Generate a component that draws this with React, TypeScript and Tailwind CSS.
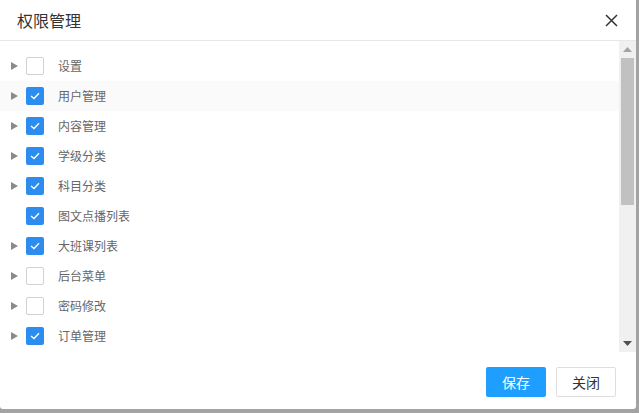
import { useState } from 'react';

interface PermItem {
  name: string;
  checked: boolean;
  hasChildren: boolean;
}

const items: PermItem[] = [
  { name: '设置', checked: false, hasChildren: true },
  { name: '用户管理', checked: true, hasChildren: true },
  { name: '内容管理', checked: true, hasChildren: true },
  { name: '学级分类', checked: true, hasChildren: true },
  { name: '科目分类', checked: true, hasChildren: true },
  { name: '图文点播列表', checked: true, hasChildren: false },
  { name: '大班课列表', checked: true, hasChildren: true },
  { name: '后台菜单', checked: false, hasChildren: true },
  { name: '密码修改', checked: false, hasChildren: true },
  { name: '订单管理', checked: true, hasChildren: true },
];

function Caret() {
  return (
    <svg width="7" height="8" viewBox="0 0 7 8">
      <path d="M0 0 L7 4 L0 8 Z" fill="#8a8a8a" />
    </svg>
  );
}

function Checkbox({ checked }: { checked: boolean }) {
  if (checked) {
    return (
      <span className="flex h-[18px] w-[18px] items-center justify-center rounded-[2px] bg-[#2d8cf0]">
        <svg width="10" height="8" viewBox="0 0 10 8">
          <path d="M1 4 L4 6.5 L9 1.2" fill="none" stroke="#fff" strokeWidth="1.3" />
        </svg>
      </span>
    );
  }
  return <span className="h-[18px] w-[18px] rounded-[2px] border border-[#d2d2d2] bg-white" />;
}

export default function App() {
  const [hovered, setHovered] = useState(1);

  return (
    <div
      className="h-[413px] w-[639px] bg-[#a3a3a3]"
      style={{ fontFamily: '"Noto Sans CJK SC", "Noto Sans", sans-serif' }}
    >
      <div className="flex h-[409px] w-[636px] flex-col rounded-b-[3px] bg-white">
        {/* header */}
        <div className="flex h-[41px] shrink-0 items-center justify-between border-b border-[#e8e8e8] pl-[17px] pr-[18px]">
          <span className="text-[16px] leading-none text-[#333]">权限管理</span>
          <svg width="13" height="13" viewBox="0 0 13 13">
            <path d="M1 1 L12 12 M12 1 L1 12" stroke="#333" strokeWidth="1.5" />
          </svg>
        </div>

        {/* tree + scrollbar */}
        <div className="flex h-[311px] shrink-0">
          <div className="flex-1 pt-[10px]">
            {items.map((item, i) => (
              <div
                key={item.name}
                onMouseEnter={() => setHovered(i)}
                className={`flex h-[30px] items-center ${hovered === i ? 'bg-[#fafafa]' : ''}`}
              >
                <span className="flex w-[26px] justify-center pl-[2px]">
                  {item.hasChildren && <Caret />}
                </span>
                <Checkbox checked={item.checked} />
                <span className="ml-[14px] text-[12px] text-[#666]">{item.name}</span>
              </div>
            ))}
          </div>
          <div className="flex w-[17px] flex-col items-center bg-[#f0f0f0]">
            <div className="flex h-[17px] items-center justify-center">
              <svg width="9" height="5" viewBox="0 0 9 5">
                <path d="M0 5 L4.5 0 L9 5 Z" fill="#a3a3a3" />
              </svg>
            </div>
            <div className="h-[147px] w-[13px] bg-[#c1c1c1]" />
            <div className="flex-1" />
            <div className="flex h-[17px] items-center justify-center">
              <svg width="9" height="5" viewBox="0 0 9 5">
                <path d="M0 0 L4.5 5 L9 0 Z" fill="#505050" />
              </svg>
            </div>
          </div>
        </div>

        {/* footer */}
        <div className="flex flex-1 items-start justify-end gap-[10px] pr-[20px] pt-[15px]">
          <button className="h-[30px] w-[60px] rounded-[2px] bg-[#1e9fff] text-[14px] text-white">
            保存
          </button>
          <button className="h-[30px] w-[60px] rounded-[2px] border border-[#dedede] bg-white text-[14px] text-[#333]">
            关闭
          </button>
        </div>
      </div>
    </div>
  );
}
